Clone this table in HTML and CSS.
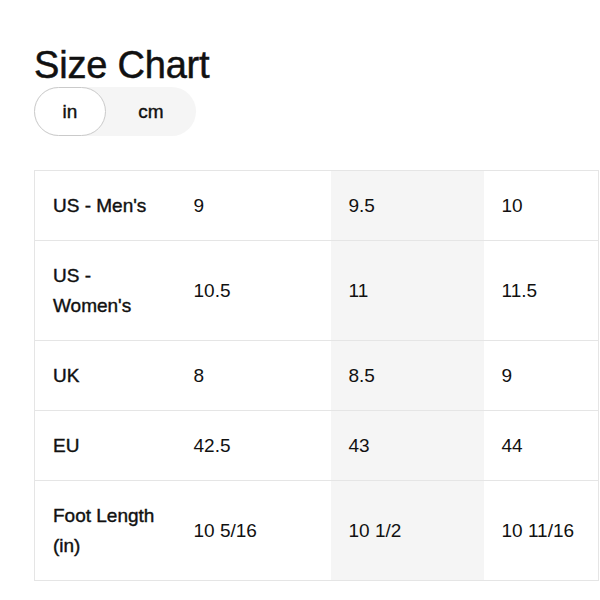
FILE: index.html
```html
<!DOCTYPE html>
<html lang="en">
<head>
    <meta charset="UTF-8">
    <title>Size Chart</title>
    <link rel="stylesheet" href="styles.css">
</head>
<body>

<div class="page">
    <h1 class="title">Size Chart</h1>

    <div class="unit-toggle">
        <button class="unit active">in</button>
        <button class="unit">cm</button>
    </div>

    <table class="chart">
        <colgroup>
            <col class="col-label">
            <col class="col-a">
            <col class="col-b">
            <col class="col-c">
        </colgroup>
        <tr>
            <th>US - Men's</th>
            <td>9</td>
            <td class="hl">9.5</td>
            <td>10</td>
        </tr>
        <tr>
            <th>US -<br>Women's</th>
            <td>10.5</td>
            <td class="hl">11</td>
            <td>11.5</td>
        </tr>
        <tr>
            <th>UK</th>
            <td>8</td>
            <td class="hl">8.5</td>
            <td>9</td>
        </tr>
        <tr>
            <th>EU</th>
            <td>42.5</td>
            <td class="hl">43</td>
            <td>44</td>
        </tr>
        <tr>
            <th>Foot Length<br>(in)</th>
            <td>10 5/16</td>
            <td class="hl">10 1/2</td>
            <td>10 11/16</td>
        </tr>
    </table>
</div>

</body>
</html>
```

FILE: styles.css
```css
body {
    margin: 0;
    background: #fff;
    color: #111;
    font-family: "Liberation Sans", Arial, sans-serif;
}

.page {
    padding: 43px 0 0 34px;
}

.title {
    margin: 0;
    font-size: 38px;
    font-weight: 500;
    line-height: 44px;
    letter-spacing: -0.2px;
    -webkit-text-stroke: 0.5px #111;
}

/* Umschalter in / cm */
.unit-toggle {
    display: inline-flex;
    background: #f5f5f5;
    border-radius: 25px;
}

.unit {
    height: 49px;
    border: 1px solid transparent;
    border-radius: 25px;
    background: transparent;
    font-family: inherit;
    font-size: 19px;
    font-weight: 500;
    color: #111;
    padding: 0;
    -webkit-text-stroke: 0.4px #111;
}

.unit.active {
    width: 72px;
    background: #fff;
    border-color: #cacaca;
}

.unit:not(.active) {
    width: 90px;
}

/* Tabelle */
.chart {
    margin-top: 34px;
    border-collapse: collapse;
    table-layout: fixed;
    width: 564px;
    border: 1px solid #e5e5e5;
    font-size: 19px;
    line-height: 30px;
}

.col-label { width: 141px; }
.col-a { width: 155px; }
.col-b { width: 153px; }
.col-c { width: 115px; }

.chart th,
.chart td {
    padding: 20px 17px 19px 18px;
    text-align: left;
    vertical-align: middle;
    border-bottom: 1px solid #e5e5e5;
}

.chart th {
    font-weight: 500;
    -webkit-text-stroke: 0.4px #111;
}

.chart td {
    font-weight: 400;
}

.chart .hl {
    background: #f5f5f5;
}
```
